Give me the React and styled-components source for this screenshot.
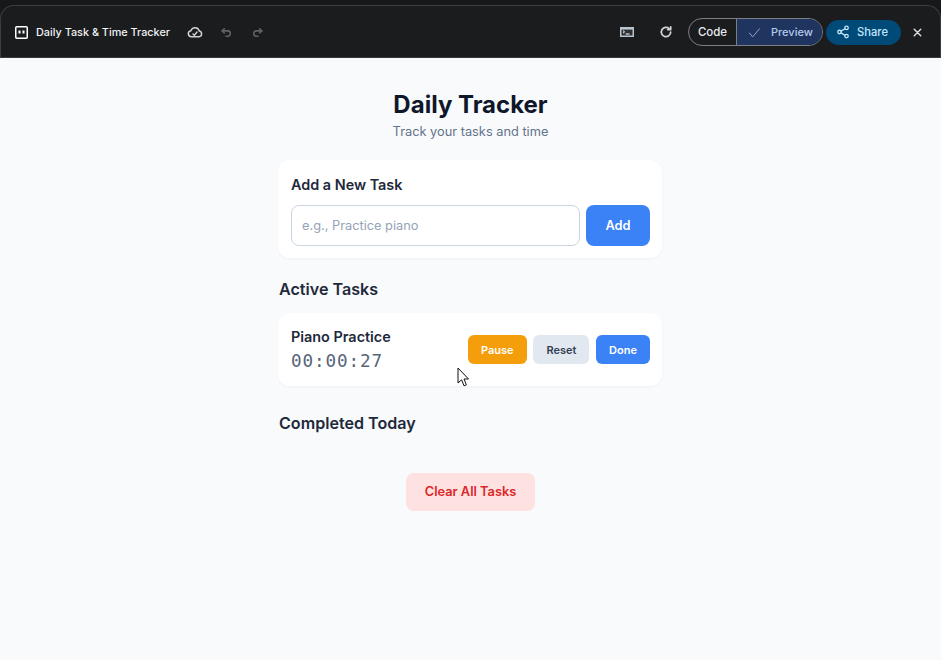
import React from "react";
import styled, { createGlobalStyle } from "styled-components";

const Global = createGlobalStyle`
  html, body { margin: 0; padding: 0; height: 100%; background: #f8fafc; overflow: hidden; }
  * { box-sizing: border-box; }
  body { font-family: Inter, "Liberation Sans", sans-serif; }
`;

const Shell = styled.div`
  width: 941px;
  height: 660px;
  display: flex;
  flex-direction: column;
  position: relative;
`;

const TopBar = styled.header`
  height: 58px;
  flex: none;
  background: #17181a;
  padding-top: 5px;
  border-bottom: 1px solid #3a3b3d;
`;

const BarInner = styled.div`
  height: 52px;
  background: #1a1c1e;
  border: 1px solid #3c3d3f;
  border-bottom: none;
  border-radius: 14px 14px 0 0;
  display: flex;
  align-items: center;
  padding: 1px 15px 0 14px;
  color: #fff;
`;

const AppTitle = styled.span`
  font-size: 10.85px;
  font-weight: 500;
  margin-left: 8px;
  color: #f1f3f4;
  font-family: Inter, sans-serif;
`;

const IconSlot = styled.span`
  display: inline-flex;
  align-items: center;
  justify-content: center;
  width: ${(p) => p.$w || 16}px;
  height: 16px;
  margin-left: ${(p) => p.$ml || 0}px;
  color: ${(p) => p.$color || "#dfe1e5"};
  flex: none;
`;

const Spacer = styled.div`
  flex: 1;
`;

const Toggle = styled.div`
  display: flex;
  height: 28px;
  margin-left: 14px;
  border: 1px solid #7d7f82;
  border-radius: 14px;
  overflow: hidden;
  font-family: Inter, sans-serif;
  font-size: 11px;
  font-weight: 500;
`;

const ToggleCode = styled.div`
  width: 48px;
  display: flex;
  align-items: center;
  justify-content: center;
  font-size: 11.5px;
  color: #e8eaed;
  border-right: 1px solid #7d7f82;
`;

const TogglePreview = styled.div`
  width: 85px;
  display: flex;
  align-items: center;
  padding-left: 10px;
  gap: 9px;
  background: #1f3560;
  color: #b4c8ec;
`;

const PreviewCheck = styled.span`
  display: inline-flex;
  color: #97a8c6;
`;

const ShareButton = styled.div`
  width: 75px;
  height: 25px;
  margin-left: 3px;
  border-radius: 13px;
  background: #004a77;
  color: #c2e7ff;
  display: flex;
  align-items: center;
  padding-left: 10px;
  gap: 7px;
  font-family: Inter, sans-serif;
  font-size: 11.2px;
  font-weight: 500;
`;

const Main = styled.main`
  flex: 1;
  width: 384px;
  margin-left: 278px;
  padding-top: 31px;
  display: flex;
  flex-direction: column;
`;

const Title = styled.h1`
  margin: 0;
  padding-left: 1px;
  font-size: 24px;
  line-height: 32px;
  font-weight: 700;
  color: #0f172a;
  text-align: center;
`;

const Subtitle = styled.p`
  margin: 1px 0 0;
  padding-left: 1px;
  font-size: 12.8px;
  line-height: 20px;
  color: #64748b;
  text-align: center;
`;

const Card = styled.section`
  background: #fff;
  border-radius: 12px;
  padding: 0 12px 0 13px;
  box-shadow: 0 1px 3px rgba(15, 23, 42, 0.04);
`;

const NewTaskCard = styled(Card)`
  margin-top: 18px;
  height: 98px;
  padding-top: 14px;
`;

const CardTitle = styled.h2`
  margin: 0 0 9px;
  font-size: 14.4px;
  line-height: 22px;
  font-weight: 600;
  color: #1e293b;
`;

const AddRow = styled.div`
  display: flex;
  gap: 6px;
`;

const TaskInput = styled.input`
  flex: 1;
  min-width: 0;
  height: 41px;
  border: 1px solid #cbd5e1;
  border-radius: 8px;
  padding: 0 10px;
  font-family: inherit;
  font-size: 12.8px;
  background: #fff;
  &::placeholder { color: #94a3b8; opacity: 1; }
`;

const AddButton = styled.button`
  width: 64px;
  height: 41px;
  border: none;
  border-radius: 8px;
  background: #3b82f6;
  color: #fff;
  font-family: inherit;
  font-size: 12.8px;
  font-weight: 600;
  padding: 0;
`;

const SectionTitle = styled.h2`
  margin: ${(p) => p.$mt}px 0 0;
  padding-left: 1px;
  font-size: 16.1px;
  line-height: 24px;
  font-weight: 600;
  color: #1e293b;
`;

const TaskCard = styled(Card)`
  margin-top: 12px;
  height: 73px;
  display: flex;
  align-items: center;
  justify-content: space-between;
`;

const TaskInfo = styled.div`
  display: flex;
  flex-direction: column;
  padding-top: 1px;
`;

const TaskName = styled.div`
  font-size: 14.4px;
  line-height: 20px;
  font-weight: 600;
  color: #1e293b;
`;

const TaskTime = styled.div`
  font-family: "DejaVu Sans Mono", monospace;
  font-size: 17.6px;
  line-height: 24px;
  margin-top: 2px;
  color: #56657a;
  letter-spacing: 0.9px;
`;

const TaskActions = styled.div`
  display: flex;
  gap: 6.6px;
`;

const ActionButton = styled.button`
  height: 29px;
  width: ${(p) => p.$w}px;
  border: none;
  border-radius: 6px;
  padding: 0;
  background: ${(p) => p.$bg};
  color: ${(p) => p.$fg};
  font-family: inherit;
  font-size: 11px;
  font-weight: 600;
`;

const ClearButton = styled.button`
  align-self: center;
  margin-top: 38px;
  width: 129px;
  height: 38px;
  border: none;
  border-radius: 8px;
  background: #fee2e2;
  color: #dc2626;
  font-family: inherit;
  font-size: 12.8px;
  font-weight: 600;
  padding: 0 0 2px 1px;
`;

const Cursor = styled.svg`
  position: absolute;
  left: 457px;
  top: 367px;
  width: 13px;
  height: 20px;
`;

const Stroke = ({ children, size = 16, sw = 1.6, vb = 24 }) => (
  <svg width={size} height={size} viewBox={`0 0 ${vb} ${vb}`} fill="none" stroke="currentColor" strokeWidth={sw} strokeLinecap="round" strokeLinejoin="round">
    {children}
  </svg>
);

export default function App() {
  return (
    <Shell>
      <Global />
      <TopBar>
        <BarInner>
          <IconSlot $w={13} $color="#fff">
            <svg width="13" height="13" viewBox="0 0 13 13">
              <rect x="0.75" y="0.75" width="11.5" height="11.5" rx="1" fill="none" stroke="currentColor" strokeWidth="1.5" />
              <rect x="3.5" y="4.5" width="2" height="3" fill="currentColor" />
              <rect x="7.5" y="4.5" width="2" height="3" fill="currentColor" />
            </svg>
          </IconSlot>
          <AppTitle>Daily Task &amp; Time Tracker</AppTitle>
          <IconSlot $ml={17} $color="#d0d3d6">
            <Stroke size={16} sw={2.2}>
              <path d="M6.5 19a4.5 4.5 0 0 1-.6-8.96A6.5 6.5 0 0 1 18.4 10.5 4.3 4.3 0 0 1 18 19Z" />
              <path d="m9 15 2 2 4-5" />
            </Stroke>
          </IconSlot>
          <IconSlot $ml={16} $color="#5f6367">
            <Stroke size={13} sw={2.8}>
              <path d="M8 5 4 9l4 4" />
              <path d="M4 9h10a5 5 0 0 1 0 10h-3" />
            </Stroke>
          </IconSlot>
          <IconSlot $ml={15} $color="#5f6367">
            <Stroke size={13} sw={2.8}>
              <path d="m16 5 4 4-4 4" />
              <path d="M20 9H10a5 5 0 0 0 0 10h3" />
            </Stroke>
          </IconSlot>
          <Spacer />
          <IconSlot $color="#c4c7c9">
            <svg width="14" height="10" viewBox="0 0 14 10">
              <rect x="0.75" y="0.75" width="12.5" height="8.5" fill="#2c3034" stroke="#b9c4cf" strokeWidth="1.5" />
              <rect x="1" y="1" width="12" height="1.6" fill="#b9c4cf" />
              <path d="m3 3.6 1.6 1.3L3 6.2" fill="none" stroke="#fff" strokeWidth="1" />
              <path d="M5.6 7h4" stroke="#fff" strokeWidth="1" />
            </svg>
          </IconSlot>
          <IconSlot $ml={23} $color="#d0d3d6">
            <Stroke size={14} sw={3}>
              <path d="M20 12a8 8 0 1 1-2.6-5.9" />
              <path d="M20 3v5h-5" />
            </Stroke>
          </IconSlot>
          <Toggle>
            <ToggleCode>Code</ToggleCode>
            <TogglePreview>
              <PreviewCheck>
                <Stroke size={15} sw={1.5}>
                  <path d="m4 13 5 6L20 6" />
                </Stroke>
              </PreviewCheck>
              Preview
            </TogglePreview>
          </Toggle>
          <ShareButton>
            <Stroke size={14} sw={2.2}>
              <circle cx="18" cy="5" r="3" />
              <circle cx="6" cy="12" r="3" />
              <circle cx="18" cy="19" r="3" />
              <path d="m8.6 10.5 6.8-4M8.6 13.5l6.8 4" />
            </Stroke>
            Share
          </ShareButton>
          <IconSlot $ml={8} $color="#dfe1e5">
            <Stroke size={13} sw={2.6}>
              <path d="M6 6l12 12M18 6 6 18" />
            </Stroke>
          </IconSlot>
        </BarInner>
      </TopBar>
      <Main>
        <Title>Daily Tracker</Title>
        <Subtitle>Track your tasks and time</Subtitle>
        <NewTaskCard>
          <CardTitle>Add a New Task</CardTitle>
          <AddRow>
            <TaskInput placeholder="e.g., Practice piano" />
            <AddButton>Add</AddButton>
          </AddRow>
        </NewTaskCard>
        <SectionTitle $mt={19}>Active Tasks</SectionTitle>
        <TaskCard>
          <TaskInfo>
            <TaskName>Piano Practice</TaskName>
            <TaskTime>00:00:27</TaskTime>
          </TaskInfo>
          <TaskActions>
            <ActionButton $w={59} $bg="#f59e0b" $fg="#fff">Pause</ActionButton>
            <ActionButton $w={56} $bg="#e2e8f0" $fg="#334155">Reset</ActionButton>
            <ActionButton $w={54} $bg="#3b82f6" $fg="#fff">Done</ActionButton>
          </TaskActions>
        </TaskCard>
        <SectionTitle $mt={25}>Completed Today</SectionTitle>
        <ClearButton>Clear All Tasks</ClearButton>
      </Main>
      <Cursor viewBox="0 0 13 20">
        <path d="M1 1v15l3.6-3.2 2.4 6 2.4-1-2.4-5.8H11.5Z" fill="#fff" stroke="#111" strokeWidth="1" strokeLinejoin="round" />
      </Cursor>
    </Shell>
  );
}
